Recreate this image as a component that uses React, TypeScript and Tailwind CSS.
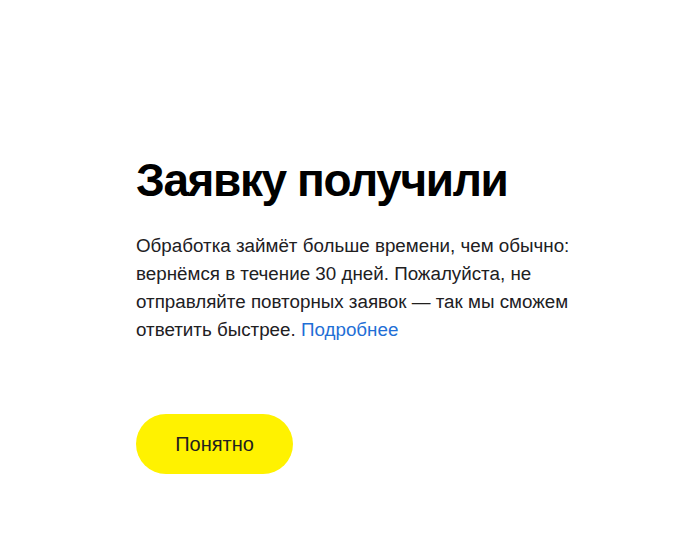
import React from 'react';

export default function App() {
  return (
    <div className="w-[700px] h-[541px] bg-white flex flex-col pl-[136px] pt-[150px] font-['Liberation_Sans',_Arial,_sans-serif] text-[#21201f]">
      <h1 className="text-[46px] leading-[60px] font-bold tracking-[-1.4px] text-black">Заявку получили</h1>
      <p className="mt-[22px] w-[480px] text-[18.8px] leading-[28px]">
        Обработка займёт больше времени, чем обычно:<br />
        вернёмся в течение 30 дней. Пожалуйста, не<br />
        отправляйте повторных заявок — так мы сможем<br />
        ответить быстрее.{' '}
        <a href="#" className="text-[#1f6fd6]">Подробнее</a>
      </p>
      <div className="mt-[70px]">
        <button className="w-[157px] h-[60px] rounded-full bg-[#fff200] text-[20px] text-[#21201f]">
          Понятно
        </button>
      </div>
    </div>
  );
}
